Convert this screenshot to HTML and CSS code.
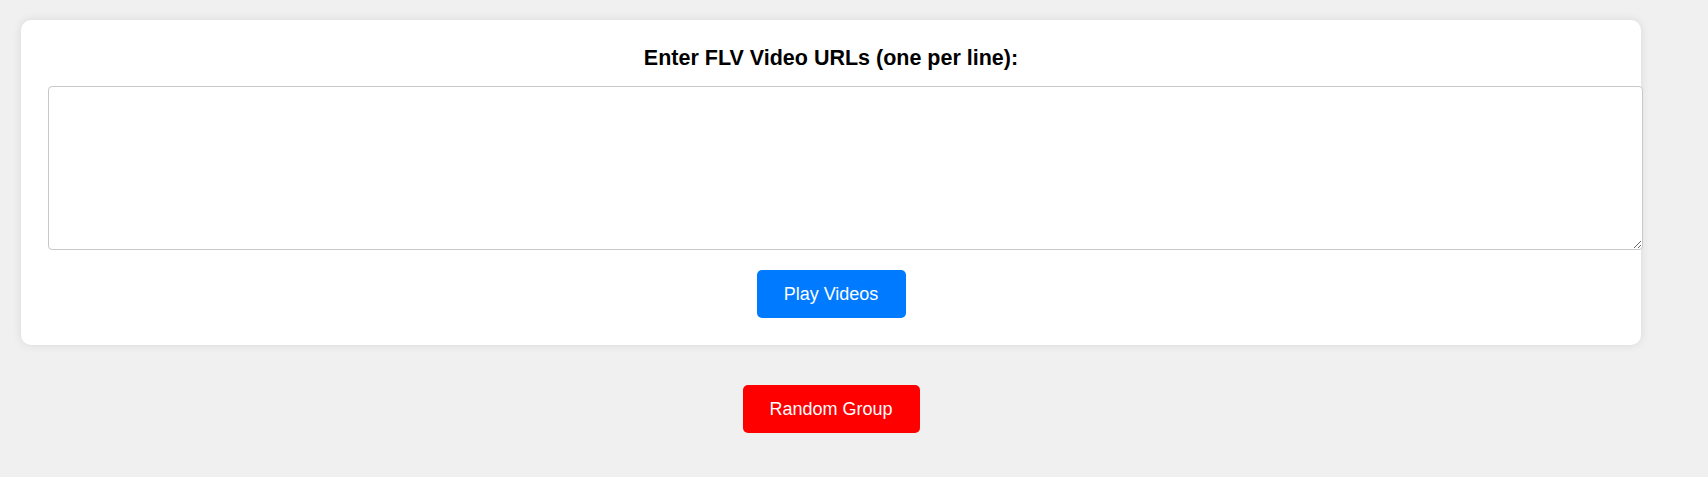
FILE: index.html
```html
<!DOCTYPE html>
<html lang="en">
<head>
<meta charset="utf-8">
<title>FLV Player</title>
<link rel="stylesheet" href="styles.css">
</head>
<body>
<div class="page">
  <div class="card">
    <label class="title" for="urls">Enter FLV Video URLs (one per line):</label>
    <textarea id="urls" class="urls"></textarea>
    <div class="actions">
      <button class="btn btn-play">Play Videos</button>
    </div>
  </div>
  <div class="actions actions-random">
    <button class="btn btn-random">Random Group</button>
  </div>
</div>
</body>
</html>
```

FILE: styles.css
```css
html, body {
  margin: 0;
  padding: 0;
}
body {
  background: #f0f0f0;
  font-family: "Liberation Sans", Arial, sans-serif;
}
.page {
  width: 1620px;
  padding: 20px 0 0 21px;
}
.card {
  background: #ffffff;
  border-radius: 10px;
  box-shadow: 0 0 10px rgba(0, 0, 0, 0.1);
  padding: 26px 27px 27px;
}
.title {
  display: block;
  text-align: center;
  font-weight: bold;
  font-size: 21.5px;
  color: #000;
  margin: 0 0 15px;
}
.urls {
  display: block;
  box-sizing: border-box;
  width: 1595px;
  height: 164px;
  margin: 0;
  padding: 10px;
  border: 1px solid #c8c8c8;
  border-radius: 4px;
  background: #fff;
  font-family: "Liberation Sans", Arial, sans-serif;
}
.actions {
  display: flex;
  justify-content: center;
  margin-top: 20px;
}
.actions-random {
  margin-top: 40px;
}
.btn {
  display: flex;
  align-items: center;
  justify-content: center;
  height: 48px;
  padding: 0;
  border: none;
  border-radius: 5px;
  color: #fff;
  font-family: "Liberation Sans", Arial, sans-serif;
  font-size: 18px;
  cursor: pointer;
}
.btn-play {
  width: 149px;
  background: #007bff;
}
.btn-random {
  width: 177px;
  background: #ff0000;
}
```
